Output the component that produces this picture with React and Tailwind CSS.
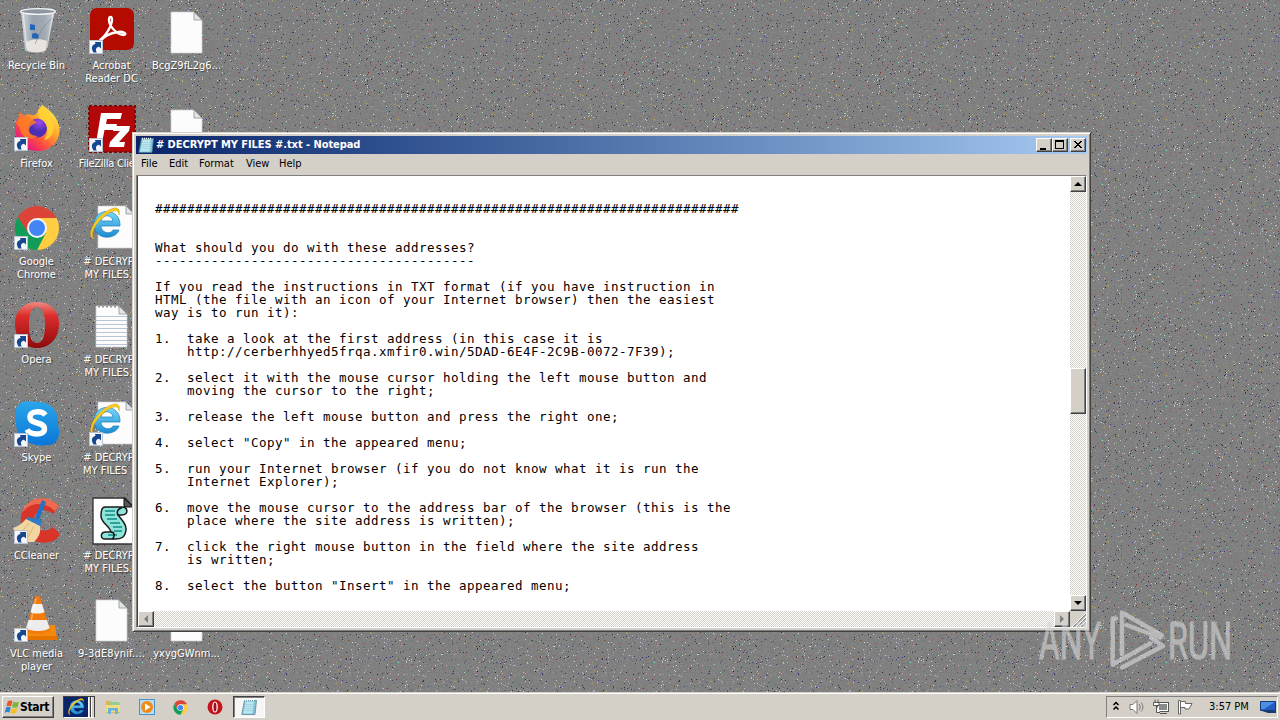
import React from "react";

const SPECK_COLORS = [
  "#1c1c24", "#20205c", "#5b2222", "#1f5040", "#e6e6e6", "#b8f0d0", "#f0c0c0",
  "#c0c0f8", "#30308c", "#b04a60", "#40a090", "#c8b050", "#6a6a6a", "#989898",
];
const TILE = 256;

function makeSpecks() {
  let seed = 1337;
  const next = () => {
    seed = (seed * 1664525 + 1013904223) >>> 0;
    return seed / 4294967296;
  };
  return SPECK_COLORS.map((color, i) => {
    const count = i > 11 ? 6000 : 255;
    let d = "";
    for (let n = 0; n < count; n++) {
      const w = i > 11 && n % 3 === 0 ? 2 : 1;
      d += `M${Math.floor(next() * TILE)} ${Math.floor(next() * TILE)}h${w}v1h-${w}z`;
    }
    return { color, d, opacity: i > 11 ? 0.38 : 0.8 };
  });
}
const SPECKS = makeSpecks();

function Wallpaper() {
  return (
    <svg className="absolute inset-0" width="1280" height="720" shapeRendering="crispEdges">
      <defs>
        <pattern id="specks" width={TILE} height={TILE} patternUnits="userSpaceOnUse">
          <rect width={TILE} height={TILE} fill="#808080" />
          {[...SPECKS].reverse().map((s) => (
            <path key={s.color} d={s.d} fill={s.color} opacity={s.opacity} />
          ))}
        </pattern>
      </defs>
      <rect width="1280" height="720" fill="url(#specks)" />
    </svg>
  );
}

function Shortcut() {
  return (
    <g>
      <rect x="2.5" y="32.5" width="13" height="13" fill="#f4f6fa" stroke="#b9c2cf" />
      <path d="M6.500 44.500C3.500 40 5 36.500 8.500 36L8 34H14V40.500L12 38.800C9 39.500 8.200 41.500 9.800 44.500Z" fill="#17478f" />
    </g>
  );
}

function RecycleBin() {
  return (
    <g>
      <defs>
        <linearGradient id="bin" x1="0" x2="1">
          <stop offset="0" stopColor="#dfe5ea" /><stop offset=".35" stopColor="#9aa6b2" />
          <stop offset=".7" stopColor="#a4adb7" /><stop offset="1" stopColor="#d5dbe1" />
        </linearGradient>
      </defs>
      <path d="M9 3L13 42C16 46 32 46 34 42L43 3Z" fill="url(#bin)" opacity=".92" />
      <path d="M14 34L15 42C18 45 31 45 34 42L35 33C29 30 19 31 14 34Z" fill="#e8e3dd" />
      <path d="M18 16L23 17L23 22L18 22ZM20 26C24 23 29 27 26 31L20 30Z" fill="#2465b8" />
      <path d="M40 10L30 21L23 36" stroke="#77828e" fill="none" opacity=".6" />
      <ellipse cx="26" cy="3.500" rx="17.500" ry="2.800" fill="#8e979f" stroke="#f3f5f6" strokeWidth="1.300" />
      <path d="M11 4L15 40M41 5L35 40" stroke="#f0f3f5" strokeWidth="1" opacity=".7" />
    </g>
  );
}

function Acrobat() {
  return (
    <g>
      <rect x="3" y="0" width="44" height="42" rx="7" fill="#b30b00" />
      <path d="M13 32C19 28 25 17 25 12C25 8 22 8 22 12C22 18 30 27 37 27C41 26 36 23 31 24C24 25 17 28 14 33Z" fill="none" stroke="#fff" strokeWidth="2.3" strokeLinejoin="round" />
      <Shortcut />
    </g>
  );
}

function Firefox() {
  return (
    <g>
      <defs>
        <linearGradient id="fox" x1=".9" y1=".1" x2=".2" y2=".9">
          <stop offset="0" stopColor="#fff14f" /><stop offset=".4" stopColor="#ffa02a" />
          <stop offset=".7" stopColor="#ff4f3e" /><stop offset="1" stopColor="#e31587" />
        </linearGradient>
        <radialGradient id="globe" cx=".6" cy=".2"><stop offset="0" stopColor="#a347f0" /><stop offset="1" stopColor="#4a2fb4" /></radialGradient>
      </defs>
      <path d="M30 0C38 5 47 13 47.500 24C48 38 37 46 26 46C13 46 3 37 3 24C3 19 4 15 7 12L8 7L12 11C15 9 18 9 20 10C23 11 25 9 26 5Z" fill="url(#fox)" />
      <circle cx="25.500" cy="23" r="9.500" fill="url(#globe)" />
      <path d="M4 18C8 11 15 11 19 14L25 17C23 19 19 20 18 22C15 27 19 31 26 31C17 37 8 31 8 23Z" fill="#ff7c24" opacity=".85" />
      <path d="M30 0C37 5 43 13 42 24C41 31 36 35 32 35C39 26 34 16 28 14C25 10 27 5 30 0Z" fill="#ffd234" opacity=".85" />
      <Shortcut />
    </g>
  );
}

function FileZilla() {
  return (
    <g>
      <rect x="2" y="0" width="46" height="46" fill="#b30808" />
      <rect x="2" y="0" width="46" height="46" fill="none" stroke="#7e0a0a" strokeWidth="2" strokeDasharray="3 2" />
      <path d="M14 7H35L33.500 13H20L19 18H30L28.500 24H17.500L15 37H9Z" fill="#fff" />
      <path d="M27 20H43L42 25L32 36H38L37 41H22L23 36L33 25H26Z" fill="#fff" />
      <Shortcut />
    </g>
  );
}

function ChromeShape() {
  return (
    <g>
      <path d="M24 14H43.600A22 22 0 0 1 24 46L32.700 29Z" fill="#ffcd40" />
      <path d="M15.300 29L4.950 13A22 22 0 0 0 24 46L32.700 29Z" fill="#0f9d58" />
      <path d="M4.950 13A22 22 0 0 1 43.600 14H24L15.300 29Z" fill="#db4437" />
      <circle cx="24" cy="24" r="10" fill="#f5f5f5" />
      <circle cx="24" cy="24" r="8" fill="#4285f4" />
    </g>
  );
}

function OperaShape() {
  return (
    <g>
      <defs>
        <linearGradient id="opera" x1="0" y1="0" x2="0" y2="1">
          <stop offset="0" stopColor="#ee8a80" /><stop offset=".3" stopColor="#dc2d2a" /><stop offset="1" stopColor="#8f0a0d" />
        </linearGradient>
      </defs>
      <path fillRule="evenodd" d="M25 0C39 0 47 9 47 22C47 36 38 46 25 46C12 46 3 36 3 22C3 9 11 0 25 0ZM25 5C19 5 17 13 17 23C17 34 19 41 25 41C31 41 33 34 33 23C33 13 31 5 25 5Z" fill="url(#opera)" />
    </g>
  );
}

function PageShape({ x = 9, w = 31, y = 4, h = 41 }) {
  return (
    <g>
      <path d={`M${x} ${y}h${w - 8}l8 8v${h - 8}h${-w}z`} fill="#fcfcfc" stroke="#cfcfcf" strokeWidth=".7" />
      <path d={`M${x + w - 8} ${y}v8h8z`} fill="#e2e4e6" stroke="#8f9296" strokeWidth=".8" />
    </g>
  );
}

function ExplorerE() {
  return (
    <g>
      <defs>
        <linearGradient id="ie" x1="0" y1="0" x2="0" y2="1"><stop offset="0" stopColor="#79d8fb" /><stop offset="1" stopColor="#1b8bd0" /></linearGradient>
      </defs>
      <path fillRule="evenodd" d="M33 22H14C14 29 24 31 26 26H32C29 36 7 37 7 20C7 3 34 3 33 22ZM26 17C25 10 15 10 14 17Z" fill="url(#ie)" stroke="#197bbd" strokeWidth=".7" />
      <path d="M7 35C-1 33 6 15 20 7C28 2 34 3 32 11C32 5 26 6 19 11C10 18 2 29 7 35Z" fill="#f7cb22" stroke="#c99b12" strokeWidth=".5" />
    </g>
  );
}

function Skype() {
  return (
    <g>
      <defs><linearGradient id="sky" x1="0" y1="0" x2="0" y2="1"><stop offset="0" stopColor="#2aa6ea" /><stop offset="1" stopColor="#0a76d8" /></linearGradient></defs>
      <path d="M16 0C20 0 22 1 26 1C38 1 46 9 46 21C46 25 47 28 47 32C47 40 41 45 34 44C30 46 6 44 4 24C4 19 3 16 3 12C4 4 9 0 16 0Z" fill="url(#sky)" />
      <path d="M33.500 14C30 9.500 18 9.500 18 16C18 24 32.500 20 32.500 28C32.500 35 18 34 15 28.500" fill="none" stroke="#fff" strokeWidth="5.500" />
      <Shortcut />
    </g>
  );
}

function CCleaner() {
  return (
    <g>
      <path d="M47 8C35 -5 12 -1 9 19C7 36 24 48 37 44C43 43 46 40 48 36L41 29C33 36 22 32 22 22C22 12 33 9 41 16Z" fill="#d8342a" />
      <path d="M47 8C35 -5 14 -1 10 15C18 4 32 3 43 13Z" fill="#ee6a50" />
      <path d="M30 2L34 4L27 22L23 20Z" fill="#2373c4" />
      <path d="M15 19L30 22L28 30L13 25Z" fill="#2f7cc4" />
      <path d="M14 21C9 27 4 29 1 30L7 44H22C27 39 29 34 28 28Z" fill="#f2d6a2" />
      <path d="M17 25L8 36M22 28L15 41" stroke="#d9b676" />
      <Shortcut />
    </g>
  );
}

function ScriptFile() {
  return (
    <g>
      <path d="M6 0H38L47 9V46H6Z" fill="#fff" stroke="#333" strokeWidth="1.300" />
      <path d="M37 0V9H46Z" fill="#555" stroke="#111" />
      <g transform="translate(1 -1)">
        <path d="M17 10H34C40 10 41 18 34 18H30C33 22 39 27 38 33C37 41 33 42 27 42H17C12 42 12 35 18 35H23C21 28 13 26 13 19C13 13 14 10 17 10Z" fill="#8ee4da" stroke="#1a1a1a" strokeWidth="1.500" />
        <path d="M17 14H27M17 18H27M19 22H29M22 26H32M25 30H34M26 34H34M20 38H29" stroke="#128a83" strokeWidth="1.300" />
        <path d="M30 18C28 14 31 11 34 11M23 35C27 35 27 40 24 42" fill="none" stroke="#111" strokeWidth="1.500" />
      </g>
    </g>
  );
}

function Vlc() {
  return (
    <g>
      <path d="M18 30L43 29L45 44H13Z" fill="#f48a0c" />
      <path d="M13 40H45V44H13Z" fill="#e87400" />
      <path d="M23 1C24 -.8 27 -.8 28 1L38 34C34 39 18 39 14 34Z" fill="#f27a0a" />
      <path d="M20.800 8H30L32.500 16C29 18 22 18 18.500 16Z" fill="#f2f2f2" />
      <path d="M16.500 24H35L37.500 32C34 36 18 36 14 32Z" fill="#ececec" />
      <path d="M24 2L17 34" stroke="#fff" strokeWidth="1.500" opacity=".35" />
      <Shortcut />
    </g>
  );
}

function TextFile() {
  return (
    <g>
      <PageShape />
      <path d="M9 14.500H40M9 18.500H40M9 22.500H40M9 26.500H40M9 30.500H40M9 34.500H40M9 38.500H40M9 42.500H40" stroke="#b8c4da" strokeWidth="1" />
      <path d="M11 4.500H32" stroke="#9a9a9a" strokeWidth="2" strokeDasharray="2 2" />
    </g>
  );
}

const desktopItems = [
  { lines: ["Recycle Bin"], art: <RecycleBin />, place: "col-start-1 row-start-1" },
  { lines: ["Firefox"], art: <g transform="translate(0 -1)"><Firefox /></g>, place: "col-start-1 row-start-2" },
  { lines: ["Google", "Chrome"], art: <g><g transform="translate(1 0)"><ChromeShape /></g><Shortcut /></g>, place: "col-start-1 row-start-3" },
  { lines: ["Opera"], art: <g><OperaShape /><Shortcut /></g>, place: "col-start-1 row-start-4" },
  { lines: ["Skype"], art: <g transform="translate(0 1)"><Skype /></g>, place: "col-start-1 row-start-5" },
  { lines: ["CCleaner"], art: <CCleaner />, place: "col-start-1 row-start-6" },
  { lines: ["VLC media", "player"], art: <Vlc />, place: "col-start-1 row-start-7" },
  { lines: ["Acrobat", "Reader DC"], art: <Acrobat />, place: "col-start-2 row-start-1" },
  { lines: ["FileZilla Client"], art: <FileZilla />, place: "col-start-2 row-start-2 tracking-[-0.25px]" },
  { lines: ["# DECRYPT", "MY FILES..."], art: <g><PageShape x={11} w={36} y={2} h={42} /><ExplorerE /></g>, place: "col-start-2 row-start-3" },
  { lines: ["# DECRYPT", "MY FILES..."], art: <TextFile />, place: "col-start-2 row-start-4" },
  { lines: ["# DECRYPT", "MY FILES ..."], art: <g><PageShape x={11} w={36} y={2} h={42} /><ExplorerE /><Shortcut /></g>, place: "col-start-2 row-start-5" },
  { lines: ["# DECRYPT", "MY FILES..."], art: <ScriptFile />, place: "col-start-2 row-start-6" },
  { lines: ["9-3dE8ynif...."], art: <PageShape />, place: "col-start-2 row-start-7 tracking-[0.15px]" },
  { lines: ["BcgZ9fL2g6..."], art: <PageShape />, place: "col-start-3 row-start-1" },
  { lines: [""], art: <PageShape />, place: "col-start-3 row-start-2" },
  { lines: ["yxygGWnm..."], art: <PageShape />, place: "col-start-3 row-start-7" },
];

function DesktopIcon({ lines, art, place }) {
  return (
    <div className={`flex flex-col items-center ${place}`}>
      <svg width="48" height="48" viewBox="1 0 48 48" className="shrink-0 overflow-visible">{art}</svg>
      <div className="mt-[3px] text-center text-[11px] leading-[13px] whitespace-nowrap text-white [text-shadow:1px_1px_1px_#444]">
        {lines.map((l, i) => <div key={i}>{l}</div>)}
      </div>
    </div>
  );
}

function NotepadGlyph({ size = 16 }) {
  return (
    <svg width={size} height={size} viewBox="0 0 16 16">
      <path d="M3.500 1.500H15.500L14 15.500H.8Z" fill="#86c5d6" stroke="#47798e" strokeWidth=".7" />
      <path d="M4.500 3H12.800L11.300 14.500H2.300Z" fill="#b9e6ef" />
      <path d="M4 5.500H12M4 7.500H12M3.500 9.500H11.500M3.500 11.500H11" stroke="#93c9d8" strokeWidth=".6" />
      <path d="M4 1.500H14" stroke="#fff" strokeWidth="1.500" strokeDasharray="1 1" />
    </svg>
  );
}

const raised = "border border-t-white border-l-white border-r-[#404040] border-b-[#404040] bg-[#d4d0c8] shadow-[inset_-1px_-1px_0_#808080]";
const track = "bg-[repeating-conic-gradient(#ffffff_0_25%,#d4d0c8_0_50%)] bg-[length:2px_2px]";

function FrameButton({ children, className = "" }) {
  return (
    <div className={`flex h-[14px] w-4 items-center justify-center ${raised} ${className}`}>
      <svg width="14" height="12" viewBox="0 0 14 12" shapeRendering="crispEdges">{children}</svg>
    </div>
  );
}

function ScrollButton({ d, muted }) {
  return (
    <div className={`flex h-4 w-4 shrink-0 items-center justify-center ${raised}`}>
      <svg width="12" height="12" viewBox="0 0 12 12"><path d={d} fill={muted ? "#808080" : "#000"} /></svg>
    </div>
  );
}

const NOTE = `
 
${"#".repeat(73)}
 
 
What should you do with these addresses?
${"-".repeat(40)}
 
If you read the instructions in TXT format (if you have instruction in
HTML (the file with an icon of your Internet browser) then the easiest
way is to run it):
 
1.  take a look at the first address (in this case it is
    http://cerberhhyed5frqa.xmfir0.win/5DAD-6E4F-2C9B-0072-7F39);
 
2.  select it with the mouse cursor holding the left mouse button and
    moving the cursor to the right;
 
3.  release the left mouse button and press the right one;
 
4.  select "Copy" in the appeared menu;
 
5.  run your Internet browser (if you do not know what it is run the
    Internet Explorer);
 
6.  move the mouse cursor to the address bar of the browser (this is the
    place where the site address is written);
 
7.  click the right mouse button in the field where the site address
    is written;
 
8.  select the button "Insert" in the appeared menu;`;

function NotepadWindow() {
  return (
    <div className="absolute top-[132px] left-[132px] flex h-[500px] w-[959px] flex-col border border-t-[#d4d0c8] border-l-[#d4d0c8] border-r-[#404040] border-b-[#404040] bg-[#d4d0c8] p-[3px] shadow-[inset_1px_1px_0_#fff,inset_-1px_-1px_0_#808080]">
      <div className="flex h-[18px] shrink-0 items-center bg-linear-to-r from-[#0a246a] to-[#a6caf0] pr-px pl-[2px]">
        <NotepadGlyph />
        <span className="ml-[2px] text-[11px] font-bold tracking-[-0.06px] whitespace-nowrap text-white">
          # DECRYPT MY FILES #.txt - Notepad
        </span>
        <div className="ml-auto flex">
          <FrameButton><path d="M3 9H9V11H3Z" /></FrameButton>
          <FrameButton><path fillRule="evenodd" d="M2 1H11V10H2ZM3 3V9H10V3Z" /></FrameButton>
          <FrameButton className="ml-[2px]">
            <path d="M3 2H5V3H6V4H8V3H9V2H11V3H10V4H9V5H8V6H9V7H10V8H11V9H9V8H8V7H6V8H5V9H3V8H4V7H5V6H6V5H5V4H4V3H3Z" />
          </FrameButton>
        </div>
      </div>
      <div className="flex h-[21px] shrink-0 items-center pl-[5px] text-[11px] text-black">
        <span className="w-[28px]">File</span>
        <span className="w-[30px]">Edit</span>
        <span className="w-[47px]">Format</span>
        <span className="w-[33px]">View</span>
        <span>Help</span>
      </div>
      <div className="flex min-h-0 grow border border-t-[#808080] border-l-[#808080] border-r-white border-b-white">
        <div className="flex min-h-0 grow flex-col border-t border-l border-[#404040]">
          <div className="flex min-h-0 grow">
            <pre className="m-0 -mt-px min-w-0 grow overflow-hidden bg-white pt-0 pl-[17px] font-['DejaVu_Sans_Mono',monospace] text-[12.500px] leading-[13px] tracking-[0.475px] text-black">{NOTE}</pre>
            <div className={`-mt-px flex w-4 shrink-0 flex-col ${track}`}>
              <ScrollButton d="M6 4L10 8H2Z" />
              <div className={`mt-[176px] h-[46px] w-4 ${raised}`} />
              <div className="mt-auto"><ScrollButton d="M2 4H10L6 8Z" /></div>
            </div>
          </div>
          <div className="flex h-4 shrink-0">
            <div className={`flex grow justify-between ${track}`}>
              <ScrollButton muted d="M8 2V10L4 6Z" />
              <ScrollButton muted d="M4 2V10L8 6Z" />
            </div>
            <svg width="16" height="16" viewBox="0 0 16 16" className="bg-[#d4d0c8]">
              <path d="M3 16L16 3M7 16L16 7M11 16L16 11" stroke="#808080" strokeWidth="1.500" />
              <path d="M2 16L16 2M6 16L16 6M10 16L16 10" stroke="#fff" />
            </svg>
          </div>
        </div>
      </div>
    </div>
  );
}

function Watermark() {
  return (
    <svg className="absolute top-[605px] left-[1034px]" width="204" height="70" opacity=".6">
      <g fill="#d8d8d8" stroke="#d8d8d8" strokeWidth="1" fontFamily="Roboto, sans-serif" fontSize="51" fontWeight="400">
        <text x="5" y="54" textLength="62" lengthAdjust="spacingAndGlyphs">ANY</text>
        <text x="134" y="54" textLength="64" lengthAdjust="spacingAndGlyphs">RUN</text>
      </g>
      <g fill="none" stroke="#dedede" strokeWidth="4.500" strokeLinejoin="round" strokeLinecap="round">
        <path d="M88 49V7.500L128 30.500L126 32.500L92.500 20" />
        <path d="M82 13.500H78.700V59.500L116 38.500" />
        <path d="M88 62.500L129 41L117 32.500" />
      </g>
    </svg>
  );
}

function TaskButton({ children, className }) {
  return <div className={`flex h-[22px] items-center justify-center ${className}`}>{children}</div>;
}

function Taskbar() {
  return (
    <div className="absolute inset-x-0 bottom-0 flex h-7 items-start border-t border-[#d4d0c8] bg-[#d4d0c8] pt-[3px] pr-[2px] pl-[2px] shadow-[inset_0_1px_0_#fff]">
      <div className={`flex h-[22px] w-[52px] items-center pl-px ${raised}`}>
        <svg width="16" height="16" viewBox="0 0 17 16" className="shrink-0">
          <path d="M4 2C6 .8 8 1 9 2L7.500 7.500C6 6.500 4.500 6.500 2.500 7.500Z" fill="#e8562b" />
          <path d="M10 2.500C12 3.500 14 3.500 16 2.500L14.500 8C12.500 9 10.500 8.800 8.500 8Z" fill="#7ab53a" />
          <path d="M2.200 8.500C4 7.500 6 7.500 7.200 8.500L5.700 14C4.500 13 2.500 13 .7 14Z" fill="#2f86d0" />
          <path d="M8.200 9C10 10 12 10 14.200 9L12.700 14.500C10.500 15.500 8.500 15.500 6.700 14.500Z" fill="#f6bf25" />
        </svg>
        <span className="text-[12px] font-bold tracking-[-0.3px]">Start</span>
      </div>
      <div className="ml-[9px] flex h-[22px] w-8 border border-t-[#404040] border-l-[#404040] border-r-[#404040] border-b-white bg-[#d4d0c8]">
        <div className="flex w-[25px] items-center justify-center border-r border-white bg-[#0a246a]">
          <svg width="19" height="18" viewBox="2 3 34 34"><ExplorerE /></svg>
        </div>
        <div className="ml-px w-px bg-[#404040]" />
        <div className="w-px bg-white" />
      </div>
      <TaskButton className="ml-[9px] w-[18px]">
        <svg width="16" height="16" viewBox="0 0 16 16">
          <path d="M1 2H6L7 4H15V14H1Z" fill="#dfb552" /><path d="M4 3H14V8H4Z" fill="#8fcf92" />
          <path d="M1 6H15V13H1Z" fill="#f3dc80" /><path d="M3 15V9H13V15H10V11.500H6V15Z" fill="#64b4dc" />
        </svg>
      </TaskButton>
      <TaskButton className="ml-4 w-[18px]">
        <svg width="16" height="16" viewBox="0 0 16 16">
          <rect x=".5" y=".5" width="15" height="15" fill="#b8dcf4" stroke="#4b92c8" />
          <circle cx="8" cy="8" r="6" fill="#f28a1a" /><path d="M6 4.500V11.500L11.500 8Z" fill="#fff" />
        </svg>
      </TaskButton>
      <TaskButton className="ml-4 w-[18px] pr-[2px]">
        <svg width="15" height="15" viewBox="1 1 46 46"><ChromeShape /></svg>
      </TaskButton>
      <TaskButton className="ml-4 w-[18px] pr-px">
        <svg width="16" height="16" viewBox="0 0 16 16">
          <circle cx="8" cy="8" r="7.500" fill="#c4141b" /><ellipse cx="8" cy="8" rx="2.800" ry="5.500" fill="#fff" /><ellipse cx="8" cy="8" rx="1.500" ry="4.500" fill="#a00d14" />
        </svg>
      </TaskButton>
      <TaskButton className="ml-[9px] w-8 border border-t-[#404040] border-l-[#404040] border-r-white border-b-white bg-[#f7f6f4] shadow-[inset_1px_1px_0_#808080]">
        <NotepadGlyph />
      </TaskButton>
      <div className="ml-auto flex h-[22px] w-[172px] items-center border border-t-[#808080] border-l-[#808080] border-r-white border-b-white pl-[5px]">
        <svg className="mb-[3px]" width="8" height="10" viewBox="0 0 8 10" fill="none" stroke="#000" strokeWidth="1.500">
          <path d="M1.500 4L4 1.500L6.500 4M1.500 8.500L4 6L6.500 8.500" />
        </svg>
        <svg className="ml-[9px]" width="17" height="16" viewBox="0 0 17 16" fill="none" stroke="#777">
          <path d="M1 5.500H4L8 1.500V14.500L4 10.500H1Z" fill="#fff" />
          <path d="M10 5C11.500 7 11.500 9 10 11M12 3.500C14.500 6 14.500 10 12 12.500" />
        </svg>
        <svg className="ml-[7px]" width="17" height="16" viewBox="0 0 17 16" fill="none" stroke="#555">
          <rect x="4.500" y="3.500" width="11" height="9" fill="#fff" /><rect x="6.500" y="5.500" width="7" height="5" fill="#8a8a8a" stroke="#888" />
          <path d="M7 14.500H14M2 .5V3M5 .5V3M.5 3.500H6V6.500H.5ZM3.500 6.500V13.500H7" fill="#fff" />
        </svg>
        <svg className="ml-[7px]" width="17" height="16" viewBox="0 0 17 16" fill="#fff" stroke="#666">
          <path d="M1.500 1.500H3.500V15H1.500ZM3.500 2.500H8.500V4.500H15L12 10H8V8.500H3.500Z" />
        </svg>
        <span className="ml-[15px] w-[48px] text-[11px] whitespace-nowrap">3:57 PM</span>
        <svg className="ml-[3px]" width="17" height="14" viewBox="0 0 17 14">
          <path d="M.5 1.500H15.500V10.500H.5Z" fill="#245dc1" stroke="#163a76" /><path d="M1 2H15L4 9H1Z" fill="#4e8fe6" />
          <path d="M2 11H16V13H8Z" fill="#183c70" />
        </svg>
      </div>
    </div>
  );
}

export default function App() {
  return (
    <div className="relative h-[720px] w-[1280px] overflow-hidden bg-[#808080] font-['DejaVu_Sans_Condensed','DejaVu_Sans',sans-serif]">
      <Wallpaper />
      <div className="absolute top-2 left-[-1px] grid auto-cols-[75px] grid-rows-[repeat(7,98px)]">
        {desktopItems.map((item, i) => <DesktopIcon key={i} {...item} />)}
      </div>
      <NotepadWindow />
      <Watermark />
      <Taskbar />
    </div>
  );
}
